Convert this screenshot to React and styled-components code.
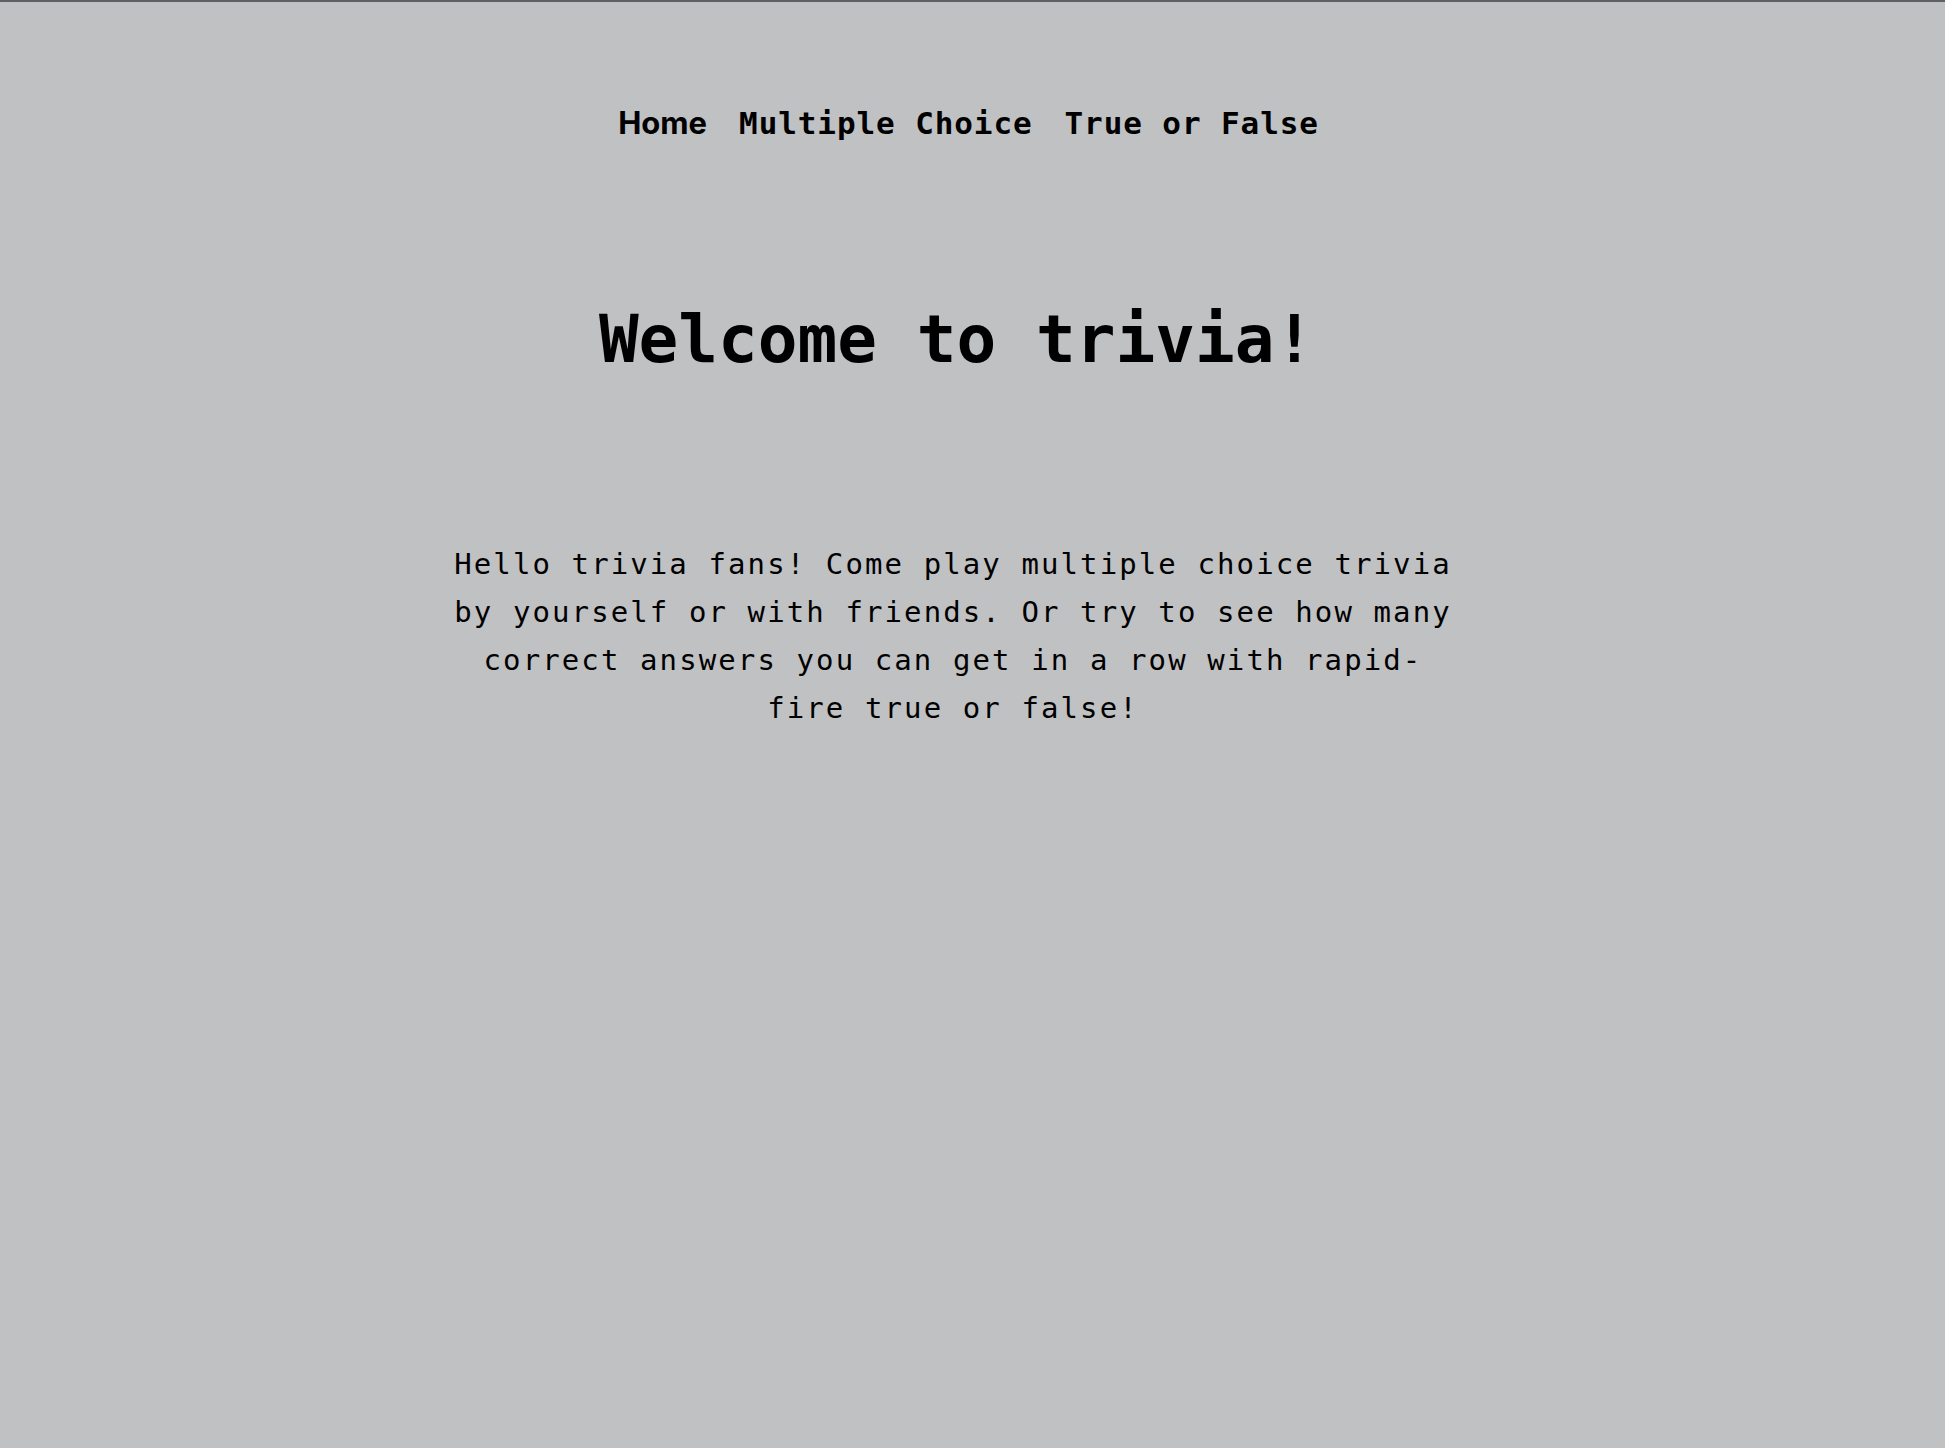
import React from "react";
import styled, { createGlobalStyle } from "styled-components";

const GlobalStyle = createGlobalStyle`
  html, body {
    margin: 0;
    padding: 0;
    background: #c0c1c3;
  }
`

const Page = styled.div`
  min-height: 100vh;
  box-sizing: border-box;
  border-top: 2px solid #5f6063;
  background: #c0c1c3;
  color: #000;
  font-family: "DejaVu Sans Mono", "Liberation Mono", monospace;
`

const Nav = styled.nav`
  display: flex;
  justify-content: center;
  align-items: baseline;
  gap: 32px;
  padding: 101px 8px 0 0;
  line-height: 40px;
`

const NavLink = styled.a`
  color: #000;
  text-decoration: none;
  font-weight: 700;
  font-family: ${(p) => (p.$home ? `"Inter", "Liberation Sans", sans-serif` : `"DejaVu Sans Mono", "Liberation Mono", monospace`)};
  font-size: ${(p) => (p.$home ? "31px" : "31px")};
  letter-spacing: ${(p) => (p.$home ? "0" : "0.9px")};
  cursor: pointer;
`

const Main = styled.main`
  display: flex;
  flex-direction: column;
  align-items: center;
`

const Title = styled.h1`
  margin: 164px 0 0;
  padding-right: 32px;
  font-size: 66px;
  line-height: 66px;
  font-weight: 700;
  text-align: center;
`

const Intro = styled.p`
  margin: 167px 39px 0 0;
  max-width: 1000px;
  font-size: 29px;
  line-height: 48px;
  letter-spacing: 2.1px;
  text-align: center;
`

export default function App() {
  return (
    <Page>
      <GlobalStyle />
      <Nav>
        <NavLink $home>Home</NavLink>
        <NavLink>Multiple Choice</NavLink>
        <NavLink>True or False</NavLink>
      </Nav>
      <Main>
        <Title>Welcome to trivia!</Title>
        <Intro>
          Hello trivia fans! Come play multiple choice trivia by yourself or with friends. Or try to see how many correct answers you can get in a row with rapid-fire true or false!
        </Intro>
      </Main>
    </Page>
  )
}
